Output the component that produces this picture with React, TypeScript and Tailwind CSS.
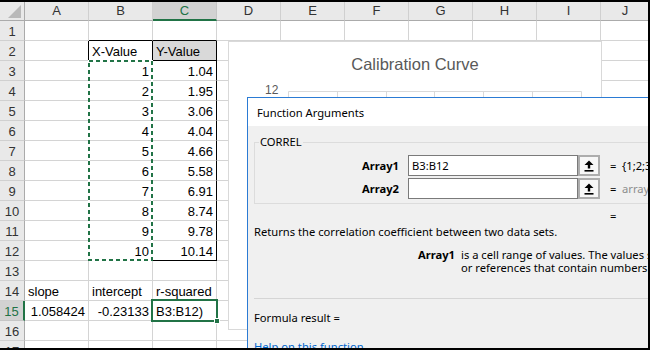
import React from 'react';

const COLS = ['A', 'B', 'C', 'D', 'E', 'F', 'G', 'H', 'I', 'J'];
const ROWS = Array.from({ length: 17 }, (_, i) => i + 1);
const Y_VALUES = ['1.04', '1.95', '3.06', '4.04', '4.66', '5.58', '6.91', '8.74', '9.78', '10.14'];

// cell contents keyed by address, with alignment
const DATA: Record<string, [string, 'l' | 'r']> = {
  B2: ['X-Value', 'l'],
  C2: ['Y-Value', 'l'],
  A14: ['slope', 'l'],
  B14: ['intercept', 'l'],
  C14: ['r-squared', 'l'],
  A15: ['1.058424', 'r'],
  B15: ['-0.23133', 'r'],
  C15: ['B3:B12)', 'l'],
};
Y_VALUES.forEach((y, i) => {
  DATA[`B${i + 3}`] = [String(i + 1), 'r'];
  DATA[`C${i + 3}`] = [y, 'r'];
});

function cellClass(r: number, c: number, align?: 'l' | 'r') {
  const inTable = r >= 2 && r <= 12;
  const right = inTable && c <= 2 ? 'border-r-black' : 'border-r-[#d4d4d4]';
  const bottom = (r === 1 || r === 2 || r === 12) && (c === 1 || c === 2) ? 'border-b-black' : 'border-b-[#d4d4d4]';
  const bg = r === 2 && c === 2 ? 'bg-[#d9d9d9]' : 'bg-white';
  const justify = align === 'r' ? 'justify-end' : 'justify-start';
  return `flex items-center ${justify} whitespace-nowrap px-[3px] pt-[2px] border-r border-b ${right} ${bottom} ${bg}`;
}

function UploadArrow() {
  return (
    <svg width="10" height="12" viewBox="0 0 10 12">
      <path d="M5 0.5 L9.5 5 L6.2 5 L6.2 8.5 L3.8 8.5 L3.8 5 L0.5 5 Z" fill="#000" />
      <rect x="0.5" y="10" width="9" height="1.6" fill="#000" />
    </svg>
  );
}

function ArgRow({ label, value, result, muted }: { label: string; value: string; result: string; muted?: boolean }) {
  return (
    <div className="flex items-center h-[21px]">
      <div className="w-[144px] shrink-0 text-right font-bold text-black">{label}</div>
      <div className="ml-[9px] w-[170px] h-[21px] shrink-0 border border-[#7a7a7a] bg-white px-[3px] flex items-center text-black">
        {value}
      </div>
      <div className="w-[22px] h-[21px] shrink-0 border-2 border-[#adadad] bg-[#f7f7f7] flex items-center justify-center">
        <UploadArrow />
      </div>
      <span className="ml-[10px] w-[12px] shrink-0 text-black">=</span>
      <span className={muted ? 'shrink-0 whitespace-nowrap text-[#8d8d8d]' : 'shrink-0 whitespace-nowrap text-black'}>{result}</span>
    </div>
  );
}

export default function App() {
  return (
    <div className="relative w-[650px] h-[350px] overflow-hidden bg-white font-['Liberation_Sans',Arial,sans-serif] text-[13px] text-black">
      <div className="mt-[2px] grid grid-cols-[25px_repeat(9,64px)_1fr] grid-rows-[19px_repeat(17,20px)]">
        {/* column headers */}
        <div className="relative bg-[#e9e9e9] border-r border-b border-r-[#ababab] border-b-[#ababab]">
          <svg className="absolute right-[3px] bottom-[2px]" width="13" height="13" viewBox="0 0 13 13">
            <path d="M13 0 L13 13 L0 13 Z" fill="#b9b9b9" />
          </svg>
        </div>
        {COLS.map((c) =>
          c === 'C' ? (
            <div key={c} className="flex items-center justify-center bg-[#d2d2d2] text-[#217346] border-r border-b-2 border-r-[#c6c6c6] border-b-[#217346]">
              {c}
            </div>
          ) : (
            <div key={c} className="flex items-center justify-center bg-[#e9e9e9] text-[#333] border-r border-b border-r-[#d0d0d0] border-b-[#ababab]">
              {c}
            </div>
          )
        )}

        {ROWS.map((r) => (
          <React.Fragment key={r}>
            {r === 15 ? (
              <div className="flex items-center justify-center pt-[2px] bg-[#d2d2d2] text-[#217346] border-r-2 border-b border-r-[#217346] border-b-[#c6c6c6]">
                {r}
              </div>
            ) : (
              <div className="flex items-center justify-center pt-[2px] bg-[#e9e9e9] text-[#333] border-r border-b border-r-[#ababab] border-b-[#d0d0d0]">
                {r}
              </div>
            )}
            {COLS.map((c, ci) => {
              const d = DATA[`${c}${r}`];
              return (
                <div key={c} className={cellClass(r, ci, d?.[1])}>
                  {d?.[0]}
                </div>
              );
            })}
          </React.Fragment>
        ))}
      </div>

      {/* copy range marching ants */}
      <svg className="absolute left-[88px] top-[60px] pointer-events-none" width="66" height="202">
        <rect x="1" y="1" width="63" height="199" fill="none" stroke="#fff" strokeWidth="2" />
        <rect x="1" y="1" width="63" height="199" fill="none" stroke="#217346" strokeWidth="2" strokeDasharray="4 3" />
      </svg>

      {/* active cell C15 */}
      <div className="absolute left-[151px] top-[299px] w-[67px] h-[23px] border-2 border-[#217346] pointer-events-none" />
      <div className="absolute left-[214px] top-[318px] w-[6px] h-[6px] bg-[#217346] border border-white" />

      {/* chart */}
      <div className="absolute left-[228px] top-[41px] w-[374px] h-[289px] bg-white border border-[#d9d9d9]">
        <div className="pt-[12px] text-center text-[16.5px] leading-[20px] text-[#595959]">Calibration Curve</div>
        <div className="absolute left-[36px] top-[41px] text-[12px] leading-[14px] text-[#595959]">12</div>
        <svg className="absolute inset-0 pointer-events-none" width="372" height="287">
          <line x1="59.5" y1="49.5" x2="352.5" y2="49.5" stroke="#d9d9d9" />
          {[59.5, 108.5, 157.5, 205.5, 254.5, 303.5, 352.5].map((x) => (
            <line key={x} x1={x} y1="49.5" x2={x} y2="280" stroke="#d9d9d9" />
          ))}
        </svg>
      </div>

      {/* Function Arguments dialog */}
      <div className="absolute left-[247px] top-[97px] w-[420px] h-[270px] border border-[#2b7bd4] bg-[#f0f0f0] font-['Noto_Sans',sans-serif] text-[11.2px] leading-[16px] text-black">
        <div className="h-[28px] bg-white flex items-center pl-[9px] pt-[2px]">Function Arguments</div>
        <div className="px-[6px]">
          <fieldset className="mt-[8px] border border-[#dcdcdc] pt-[5px] pb-[4px]">
            <legend className="ml-[4px] px-[1px] leading-[16px]">CORREL</legend>
            <ArgRow label="Array1" value="B3:B12" result="{1;2;3;4;5;6;7;8;9;10}" />
            <div className="h-[2px]" />
            <ArgRow label="Array2" value="" result="array" muted />
          </fieldset>
          <div className="mt-[4px] h-[16px] pl-[356px]">=</div>
          <div className="h-[16px] whitespace-nowrap">Returns the correlation coefficient between two data sets.</div>
          <div className="mt-[8px] flex pl-[164px] leading-[13px] whitespace-nowrap">
            <div className="w-[43px] shrink-0 font-bold">Array1</div>
            <div className="shrink-0">
              <div>is a cell range of values. The values should be numbers, names, arrays,</div>
              <div>or references that contain numbers.</div>
            </div>
          </div>
          <div className="mt-[24px] h-px bg-[#d5d5d5]" />
          <div className="mt-[11px] h-[16px]">Formula result =</div>
          <div className="mt-[13px] h-[16px] text-[#0066cc] underline">Help on this function</div>
        </div>
      </div>

      {/* screenshot frame */}
      <div className="absolute inset-0 border-t-2 border-r-2 border-b-2 border-black pointer-events-none" />
    </div>
  );
}
